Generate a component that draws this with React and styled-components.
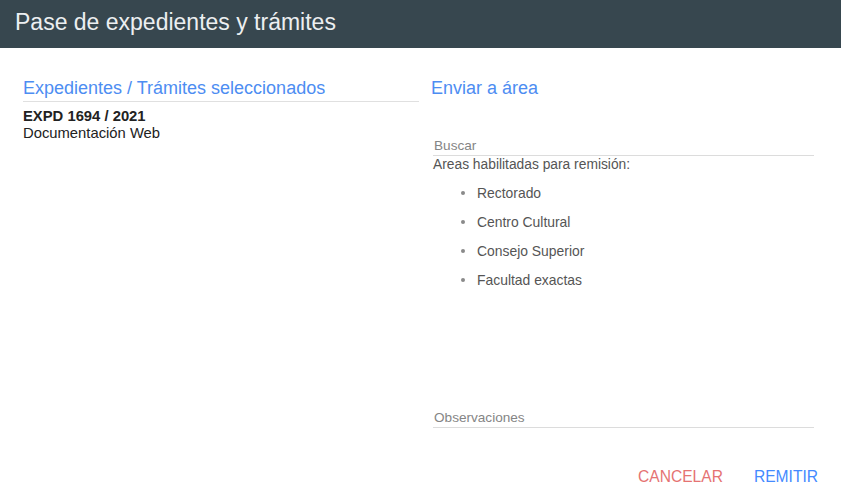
import React from 'react';
import styled, { createGlobalStyle } from 'styled-components';

const GlobalStyle = createGlobalStyle`
	html, body {
		margin: 0;
		padding: 0;
		background: #fff;
		font-family: "Liberation Sans", Arial, sans-serif;
	}
`;

const Dialog = styled.div`
	width: 841px;
	height: 501px;
	display: flex;
	flex-direction: column;
	background: #fff;
`;

const Header = styled.header`
	height: 48px;
	flex-shrink: 0;
	background: #37474f;
	display: flex;
	align-items: flex-start;
	padding: 8px 0 0 15px;
	box-sizing: border-box;

	h1 {
		margin: 0;
		font-size: 23px;
		line-height: 28px;
		font-weight: 400;
		color: #eceff1;
	}
`;

const Body = styled.div`
	display: grid;
	grid-template-columns: 396px 1fr;
	column-gap: 12px;
	padding: 29px 27px 0 23px;
	flex: 1;
`;

const Column = styled.section`
	display: flex;
	flex-direction: column;
`;

const Heading = styled.h2`
	margin: 0;
	font-size: 18px;
	font-weight: 400;
	line-height: 22px;
	color: #4d8df2;
	padding-bottom: 2px;
	border-bottom: ${(p) => (p.$ruled ? '1px solid #e0e0e0' : '1px solid transparent')};
`;

const Item = styled.div`
	margin-top: 6px;
	font-size: 14.8px;
	line-height: 17px;
	color: #222;

	strong {
		display: block;
		font-weight: 700;
	}
`;

const Field = styled.input`
	display: block;
	width: 380px;
	margin: ${(p) => p.$top}px 0 0 2px;
	padding: 0 0 1px 1px;
	border: none;
	border-bottom: 1px solid #dcdcdc;
	outline: none;
	font-family: inherit;
	font-size: 13.6px;
	line-height: 16px;
	color: #333;
	background: transparent;

	&::placeholder {
		color: #858585;
	}
`;

const Label = styled.div`
	margin: 1px 0 0 2px;
	font-size: 13.8px;
	line-height: 16px;
	color: #555;
`;

const AreaList = styled.ul`
	margin: 5px 0 0;
	padding-left: 46px;
	list-style: none;

	li {
		display: flex;
		align-items: center;
		height: 29px;
		font-size: 13.9px;
		color: #555;

		&::before {
			content: '';
			width: 4px;
			height: 4px;
			border-radius: 50%;
			background: #8a8a8a;
			margin: 1px 12px 0 -16px;
		}
	}
`;

const Actions = styled.div`
	display: flex;
	justify-content: flex-end;
	gap: 31px;
	padding: 0 23px 15px 0;
`;

const Button = styled.button`
	border: none;
	background: none;
	padding: 0;
	font-family: inherit;
	font-size: 15.6px;
	text-transform: uppercase;
	color: ${(p) => (p.$danger ? '#e57373' : '#448aff')};
	cursor: pointer;
`;

const areas = ['Rectorado', 'Centro Cultural', 'Consejo Superior', 'Facultad exactas'];

export default function App() {
	return (
		<Dialog>
			<GlobalStyle />
			<Header>
				<h1>Pase de expedientes y trámites</h1>
			</Header>
			<Body>
				<Column>
					<Heading $ruled>Expedientes / Trámites seleccionados</Heading>
					<Item>
						<strong>EXPD 1694 / 2021</strong>
						Documentación Web
					</Item>
				</Column>
				<Column>
					<Heading>Enviar a área</Heading>
					<Field $top={36} placeholder="Buscar" />
					<Label>Areas habilitadas para remisión:</Label>
					<AreaList>
						{areas.map((a) => (
							<li key={a}>{a}</li>
						))}
					</AreaList>
					<Field $top={116} placeholder="Observaciones" />
				</Column>
			</Body>
			<Actions>
				<Button $danger>Cancelar</Button>
				<Button>Remitir</Button>
			</Actions>
		</Dialog>
	);
}
